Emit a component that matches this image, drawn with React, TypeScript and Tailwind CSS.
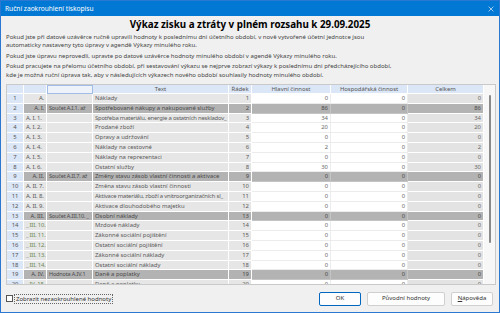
import React from 'react';

type Row = {
  n: number;
  code: string;
  sum?: string;
  text: string;
  hl: number;
  hosp: number;
  total: number;
  kind?: 'sum' | 'sub';
  right?: boolean;
};

const rows: Row[] = [
  { n: 1, code: 'A.', text: 'Náklady', hl: 0, hosp: 0, total: 0, right: true },
  { n: 2, code: 'A. I.', sum: 'Součet A.I.1. až', text: 'Spotřebované nákupy a nakupované služby', hl: 86, hosp: 0, total: 86, kind: 'sum', right: true },
  { n: 3, code: 'A. I. 1.', text: 'Spotřeba materiálu, energie a ostatních neskladov_', hl: 34, hosp: 0, total: 34 },
  { n: 4, code: 'A. I. 2.', text: 'Prodané zboží', hl: 20, hosp: 0, total: 20 },
  { n: 5, code: 'A. I. 3.', text: 'Opravy a udržování', hl: 0, hosp: 0, total: 0 },
  { n: 6, code: 'A. I. 4.', text: 'Náklady na cestovné', hl: 2, hosp: 0, total: 2 },
  { n: 7, code: 'A. I. 5.', text: 'Náklady na reprezentaci', hl: 0, hosp: 0, total: 0 },
  { n: 8, code: 'A. I. 6.', text: 'Ostatní služby', hl: 30, hosp: 0, total: 30 },
  { n: 9, code: 'A. II.', sum: 'Součet A.II.7. až', text: 'Změny stavu zásob vlastní činnosti a aktivace', hl: 0, hosp: 0, total: 0, kind: 'sum', right: true },
  { n: 10, code: 'A. II. 7.', text: 'Změna stavu zásob vlastní činnosti', hl: 0, hosp: 0, total: 0 },
  { n: 11, code: 'A. II. 8.', text: 'Aktivace materiálu, zboží a vnitroorganizačních sl_', hl: 0, hosp: 0, total: 0 },
  { n: 12, code: 'A. II. 9.', text: 'Aktivace dlouhodobého majetku', hl: 0, hosp: 0, total: 0 },
  { n: 13, code: 'A. III.', sum: 'Součet A.III.10. _', text: 'Osobní náklady', hl: 0, hosp: 0, total: 0, kind: 'sum', right: true },
  { n: 14, code: 'III. 10.', text: 'Mzdové náklady', hl: 0, hosp: 0, total: 0, kind: 'sub' },
  { n: 15, code: 'III. 11.', text: 'Zákonné sociální pojištění', hl: 0, hosp: 0, total: 0, kind: 'sub' },
  { n: 16, code: 'III. 12.', text: 'Ostatní sociální pojištění', hl: 0, hosp: 0, total: 0, kind: 'sub' },
  { n: 17, code: 'III. 13.', text: 'Zákonné sociální náklady', hl: 0, hosp: 0, total: 0, kind: 'sub' },
  { n: 18, code: 'III. 14.', text: 'Ostatní sociální náklady', hl: 0, hosp: 0, total: 0, kind: 'sub' },
  { n: 19, code: 'A. IV.', sum: 'Hodnota A.IV.1', text: 'Daně a poplatky', hl: 0, hosp: 0, total: 0, kind: 'sum', right: true },
  { n: 20, code: 'IV. 15.', text: 'Daně a poplatky', hl: 0, hosp: 0, total: 0, kind: 'sub' },
];

const cols = 'grid grid-cols-[17px_23px_46px_136px_23px_79px_77px_76px]';

function GridRow({ r }: { r: Row }) {
  const isSum = r.kind === 'sum';
  const gray = isSum ? 'bg-[#b3b3b3] text-[#4a4a4a]' : 'bg-[#e6e6e6] text-[#5a5a5a]';
  const white = isSum ? 'bg-[#b3b3b3] text-[#4a4a4a]' : 'bg-white text-[#6a6a6a]';
  const total = isSum ? 'bg-[#b3b3b3] text-[#4a4a4a]' : 'bg-[#e3e3e3] text-[#6a6a6a]';
  const cell = 'h-[9.8px] leading-[9.8px] px-[2px] whitespace-nowrap overflow-hidden border-r border-b';
  // long texts are squeezed a bit so the trailing "_" stays visible, as in the original grid
  const longText = r.text.length > 46;
  return (
    <div className={cols}>
      <div className={`${cell} bg-[#dbe6f6] text-[#555] text-center border-white`}>{r.n}</div>
      <div
        className={`${cell} ${gray} border-white tracking-[-0.15px] ${r.right ? 'text-right' : 'text-left'} ${r.kind === 'sub' ? 'text-[#6b8a52]' : ''}`}
      >
        {r.kind === 'sub' && <span className="text-[#888] mr-[1px]">_</span>}
        {r.code}
      </div>
      <div className={`${cell} ${gray} border-white px-[1px] text-[5.5px] tracking-[-0.15px]`}>{r.sum}</div>
      <div className={`${cell} ${gray} border-white ${longText ? 'tracking-[-0.2px]' : ''}`}>{r.text}</div>
      <div className={`${cell} ${gray} border-white text-right`}>{r.n}</div>
      <div className={`${cell} ${white} text-right ${isSum ? 'border-[#c4c4c4]' : 'border-[#ececec]'}`}>{r.hl}</div>
      <div className={`${cell} ${white} text-right ${isSum ? 'border-[#c4c4c4]' : 'border-[#ececec]'}`}>{r.hosp}</div>
      <div className={`${cell} ${total} text-right border-white`}>{r.total}</div>
    </div>
  );
}

export default function App() {
  return (
    <div className="w-[500px] h-[313px] overflow-hidden bg-[#f0f0f0] border border-[#2a78d2] flex flex-col font-['Noto_Sans',sans-serif] text-[6px] text-[#333]">
      {/* Title bar */}
      <div className="h-[15px] shrink-0 bg-[#0078d4] flex items-center justify-between pl-[4px] pr-[4px] text-white">
        <span className="text-[6.6px]">Ruční zaokrouhlení tiskopisu</span>
        <svg width="6" height="6" viewBox="0 0 10 10" className="mr-[1px]">
          <path d="M1 1L9 9M9 1L1 9" stroke="#dce9f7" strokeWidth="1.2" />
        </svg>
      </div>

      <div className="flex-1 flex flex-col px-[5px]">
        <h1 className="text-center font-bold text-[9.8px] text-black leading-[14px] mt-[2px]">
          Výkaz zisku a ztráty v plném rozsahu k 29.09.2025
        </h1>
        <div className="text-[#444] leading-[8.4px] mt-[1px]">
          <p>
            Pokud jste při datové uzávěrce ručně upravili hodnoty k poslednímu dni účetního období, v nově vytvořené účetní jednotce jsou
            <br />
            automaticky nastaveny tyto úpravy v agendě Výkazy minulého roku.
          </p>
          <p className="mt-[2px]">Pokud jste úpravu neprovedli, upravte po datové uzávěrce hodnoty minulého období v agendě Výkazy minulého roku.</p>
          <p className="mt-[2px]">
            Pokud pracujete na přelomu účetního období, při sestavování výkazu se nejprve zobrazí výkazy k poslednímu dni předcházejícího období,
            <br />
            kde je možná ruční úprava tak, aby v následujících výkazech nového období souhlasily hodnoty minulého období.
          </p>
        </div>

        {/* Grid */}
        <div className="mt-[5px] h-[201px] w-[490px] border border-[#c9c9c9] flex bg-[#f7f7f7] overflow-hidden">
          <div className="w-[477px] shrink-0 text-[5.9px]">
            <div className={`${cols} text-[#555]`}>
              <div className="h-[9px] bg-[#dbe6f6] border-r border-b border-white" />
              <div className="h-[9px] bg-[#dbe6f6] border-r border-b border-white" />
              <div className="h-[9px] bg-[#eef3fa] border border-[#9fbde6]" />
              <div className="h-[9px] leading-[9px] text-center bg-[#dbe6f6] border-r border-b border-white">Text</div>
              <div className="h-[9px] leading-[9px] text-center bg-[#dbe6f6] border-r border-b border-white">Řádek</div>
              <div className="h-[9px] leading-[9px] text-center bg-[#dbe6f6] border-r border-b border-white">Hlavní činnost</div>
              <div className="h-[9px] leading-[9px] text-center bg-[#dbe6f6] border-r border-b border-white">Hospodářská činnost</div>
              <div className="h-[9px] leading-[9px] text-center bg-[#dbe6f6] border-r border-b border-white">Celkem</div>
            </div>
            {rows.map((r) => (
              <GridRow key={r.n} r={r} />
            ))}
          </div>
          <div className="flex-1 flex justify-center pt-[10px]">
            <div className="w-[2px] h-[148px] bg-[#8a8a8a] rounded-full" />
          </div>
        </div>

        {/* Footer */}
        <div className="flex-1 flex items-center justify-between">
          <label className="flex items-center gap-[1px]">
            <span className="w-[7px] h-[7px] border border-[#555] bg-white" />
            <span className="border border-dotted border-[#666] px-[1px] leading-[8px] text-[#333]">Zobrazit nezaokrouhlené hodnoty</span>
          </label>
          <div className="flex gap-[6px] pr-[1px]">
            <button className="w-[42px] h-[14px] bg-[#fdfdfd] border border-[#0067c0] rounded-[2px] text-[#333]">OK</button>
            <button className="w-[78px] h-[14px] bg-[#fdfdfd] border border-[#cfcfcf] rounded-[2px] text-[#333]">Původní hodnoty</button>
            <button className="w-[42px] h-[14px] bg-[#fdfdfd] border border-[#cfcfcf] rounded-[2px] text-[#333]">
              <span className="underline">N</span>ápověda
            </button>
          </div>
        </div>
      </div>
    </div>
  );
}
